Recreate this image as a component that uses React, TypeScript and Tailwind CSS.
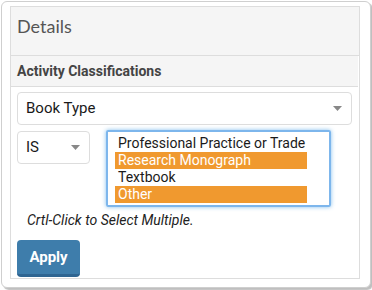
import { useState } from "react";

const options = ["Professional Practice or Trade", "Research Monograph", "Textbook", "Other"];

function Caret() {
    return (
        <svg width="9" height="5" viewBox="0 0 9 5" className="shrink-0">
            <path d="M0 0h9L4.5 5z" fill="#888" />
        </svg>
    );
}

export default function App() {
    const [selected] = useState<string[]>(["Research Monograph", "Other"]);

    return (
        <div className="w-[372px] h-[290px] bg-white pt-px pl-px font-['Roboto',sans-serif]">
            <div className="w-[370px] h-[287px] rounded-[6px] border border-[#cfcfcf] bg-white shadow-[2px_2px_1px_rgba(0,0,0,0.25)] pl-[8px] pt-[4px]">
                <div className="w-[350px] h-[273px] border border-[#dddddd] flex flex-col">
                    <div className="h-[49px] bg-[#f5f5f5] border-b border-[#dddddd] flex items-center pl-[6px] pb-[10px]">
                        <span className="text-[18px] text-[#555] font-['Lato',sans-serif]">Details</span>
                    </div>
                    <div className="h-[31px] bg-[#f5f5f5] border-b border-[#dddddd] flex items-center pl-[6px] mr-px">
                        <span className="text-[14px] font-bold text-[#444]">Activity Classifications</span>
                    </div>
                    <div className="flex-1 px-[6px] pt-[5px]">
                        <div className="h-[33px] w-[335px] rounded-[4px] border border-[#dddddd] flex items-center justify-between pl-[8px] pr-[9px]">
                            <span className="text-[15px] text-[#1a1a1a]">Book Type</span>
                            <Caret />
                        </div>
                        <div className="flex mt-[5px] gap-[16px]">
                            <div className="h-[33px] w-[73px] mt-px rounded-[4px] border border-[#dddddd] flex items-center justify-between pl-[8px] pr-[9px]">
                                <span className="text-[15px] text-[#1a1a1a]">IS</span>
                                <Caret />
                            </div>
                            <div className="w-[225px] h-[77px] rounded-[2px] border-2 border-[#7db6ec] shadow-[0_0_4px_rgba(102,175,233,0.8)] pl-[7px] pt-[3px]">
                                {options.map((o) => (
                                    <div
                                        key={o}
                                        className={`w-[192px] h-[17px] leading-[17px] pl-[3px] text-[14px] ${
                                            selected.includes(o) ? "bg-[#f0992f] text-white" : "text-[#1a1a1a]"
                                        }`}
                                    >
                                        {o}
                                    </div>
                                ))}
                            </div>
                        </div>
                        <div className="mt-[4px] pl-[10px] text-[14px] italic text-[#222] leading-[18px]">
                            Crtl-Click to Select Multiple.
                        </div>
                        <button className="mt-[11px] w-[63px] h-[37px] rounded-[4px] bg-[#3e7dab] border-b-[3px] border-[#2f6591] text-white font-bold text-[15px]">
                            Apply
                        </button>
                    </div>
                </div>
            </div>
        </div>
    );
}
